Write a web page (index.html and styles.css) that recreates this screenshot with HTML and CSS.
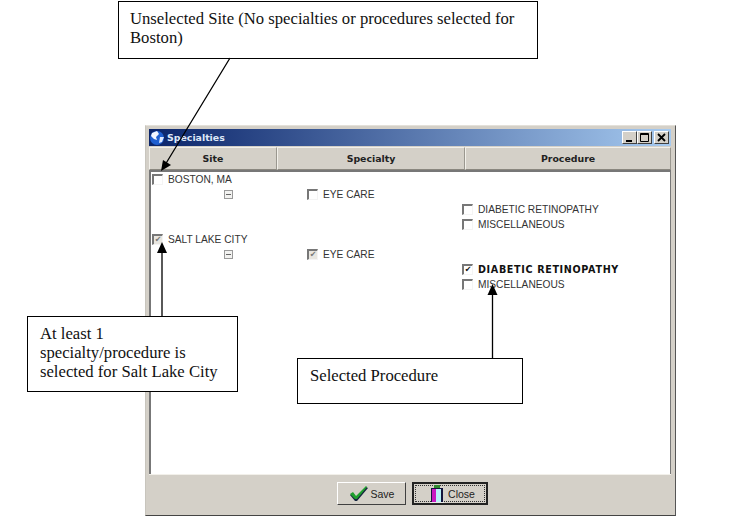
FILE: index.html
```html
<!DOCTYPE html>
<html>
<head>
	<title>Specialties</title>
	<link rel="stylesheet" href="styles.css">
</head>
<body>

<div class="window">
	<div class="titlebar">
		<svg class="globe" width="16" height="16" viewBox="0 0 16 16">
			<circle cx="8" cy="8" r="7" fill="#1f5fd0"/>
			<path d="M3 3 L8 1 L10 4 L7 7 L8 10 L5 9 L2 6 Z" fill="#f2f6ff"/>
			<path d="M11 7 L15 7 L13 12 L10 13 Z" fill="#dce8ff"/>
		</svg>
		<span class="title">Specialties</span>
		<div class="winbtns">
			<span class="winbtn"><svg width="13" height="11" viewBox="0 0 13 11"><rect x="3" y="8" width="6" height="2" fill="#000"/></svg></span>
			<span class="winbtn"><svg width="13" height="11" viewBox="0 0 13 11"><path d="M2.5 1.5 H10.5 V9.5 H2.5 Z M2 2.5 H11" fill="none" stroke="#000"/></svg></span>
			<span class="winbtn winbtn-close"><svg width="13" height="11" viewBox="0 0 13 11"><path d="M3 2 L10 9 M10 2 L3 9" fill="none" stroke="#000" stroke-width="1.8"/></svg></span>
		</div>
	</div>

	<div class="headers">
		<div class="hdr hdr-site">Site</div>
		<div class="hdr hdr-spec">Specialty</div>
		<div class="hdr hdr-proc">Procedure</div>
	</div>

	<div class="tree">
		<label class="item col1"><span class="chk"></span>BOSTON, MA</label>
		<span class="expander col1 r2"></span>
		<label class="item col2 r2"><span class="chk"></span>EYE CARE</label>
		<label class="item col3 r3"><span class="chk"></span>DIABETIC RETINOPATHY</label>
		<label class="item col3 r4"><span class="chk"></span>MISCELLANEOUS</label>
		<label class="item col1 r5"><span class="chk grey">&#10004;</span>SALT LAKE CITY</label>
		<span class="expander col1 r6"></span>
		<label class="item col2 r6"><span class="chk grey">&#10004;</span>EYE CARE</label>
		<label class="item col3 r7 picked"><span class="chk">&#10004;</span>DIABETIC RETINOPATHY</label>
		<label class="item col3 r8"><span class="chk"></span>MISCELLANEOUS</label>
	</div>

	<div class="footer">
		<button class="btn btn-save">
			<svg width="20" height="16" viewBox="0 0 20 16">
				<path d="M1 9 L4 7 L7 11 L17 1 L19 2 L8 15 L6 15 Z" fill="#16263f"/>
				<path d="M1 8 L4 6 L7 10 L17 0 L18 1 L8 13 L6 13 Z" fill="#1fa02e"/>
			</svg>
			Save
		</button>
		<button class="btn btn-close">
			<span class="focus">
				<svg width="16" height="20" viewBox="0 0 16 20">
					<rect x="5" y="1" width="6" height="3" fill="#2f8a2f"/>
					<rect x="2" y="4" width="12" height="14" fill="#14143c"/>
					<rect x="3" y="5" width="4" height="13" fill="#c818c0"/>
					<rect x="7" y="5" width="5" height="13" fill="#b8f0f8"/>
					<rect x="1" y="18" width="14" height="1" fill="#e8e8e8"/>
				</svg>
				Close
			</span>
		</button>
	</div>
</div>

<!-- callouts drawn over the screenshot -->
<div class="note note-boston">Unselected Site (No specialties or procedures selected for Boston)</div>
<div class="note note-slc">At least 1 specialty/procedure is selected for Salt Lake City</div>
<div class="note note-proc">Selected Procedure</div>

<svg class="arrows" width="732" height="520" viewBox="0 0 732 520">
	<path d="M230 58 L165 165 M162 316 L162 250 M492.500 358 L492.500 292" fill="none" stroke="#000" stroke-width="1.3"/>
	<path d="M161 171 L163 160 L171 165 Z" fill="#000"/>
	<path d="M162 242 L157 253 L167 253 Z" fill="#000"/>
	<path d="M492.500 284 L487.500 295 L497.500 295 Z" fill="#000"/>
</svg>

</body>
</html>
```

FILE: styles.css
```css
html, body {margin:0;padding:0;background:#fff;}
body {width:732px;height:520px;position:relative;overflow:hidden;}

.window {
	box-sizing:border-box;
	width:531px;
	height:391px;
	margin:125px 0 0 145px;
	padding:3px 4px 3px 3px;
	background:#d4d0c8;
	border:1px solid;
	border-color:#e4e1da #555 #444 #c8c5bd;
	display:flex;
	flex-direction:column;
	font-family:"Liberation Sans",sans-serif;
}

.titlebar {
	height:17px;
	flex:none;
	display:flex;
	align-items:center;
	background:linear-gradient(to right,#0a246a,#a6caf0);
	color:#fff;
}
.globe {margin:0 2px 0 0;}
.title {font:bold 9.400px "DejaVu Sans",sans-serif;color:#dfe8f8;}
.winbtns {margin-left:auto;display:flex;margin-right:2px;}
.winbtn {
	box-sizing:border-box;
	width:15px;
	height:13px;
	background:#d4d0c8;
	border:1px solid;
	border-color:#fff #404040 #404040 #fff;
	display:flex;
}
.winbtn svg {margin-left:-0.5px;}
.winbtn-close {margin-left:2px;}

.headers {
	height:23px;
	flex:none;
	margin-top:1px;
	display:flex;
}
.hdr {
	box-sizing:border-box;
	border:1px solid;
	border-color:#f2f0ea #9a978f #8a877f #f2f0ea;
	text-align:center;
	font:bold 9.400px/21px "DejaVu Sans",sans-serif;
	color:#222;
}
.hdr-site {width:128px;}
.hdr-spec {width:188px;}
.hdr-proc {flex:1;}

.tree {
	flex:1;
	background:#fff;
	border:solid #777;
	border-width:2px 1px 0 2px;
	display:grid;
	grid-template-columns:155px 155px 1fr;
	grid-template-rows:repeat(8,15px);
	padding-left:1px;
	font-size:10.200px;
	color:#333;
}
.item {display:flex;align-items:center;white-space:nowrap;}
.col1 {grid-column:1;}
.col2 {grid-column:2;}
.col3 {grid-column:3;}
.r2 {grid-row:2;}
.r3 {grid-row:3;}
.r4 {grid-row:4;}
.r5 {grid-row:5;}
.r6 {grid-row:6;}
.r7 {grid-row:7;}
.r8 {grid-row:8;}
.picked {font:bold 9.600px "DejaVu Sans",sans-serif;letter-spacing:.65px;color:#111;}

.chk {
	box-sizing:border-box;
	width:11px;
	height:11px;
	margin-right:5px;
	border:solid #fff;
	border-width:2px 1px 1px 2px;
	border-color:#777 #f4f4f4 #f4f4f4 #777;
	font:8px/8px "DejaVu Sans",sans-serif;
	letter-spacing:0;
	text-align:center;
	color:#111;
}
.chk.grey {background:#e8e6e0;color:#777;}

.expander {
	box-sizing:border-box;
	width:9px;
	height:9px;
	margin:3px 0 0 72px;
	border:1px solid #999;
	background:linear-gradient(#666,#666) center/5px 1px no-repeat #f2f2f0;
}

.footer {
	height:37px;
	flex:none;
	border-top:1px solid #f2f0ea;
	display:flex;
	justify-content:center;
	align-items:center;
	gap:6px;
	padding-left:5px;
}
.btn {
	box-sizing:border-box;
	height:23px;
	background:#d4d0c8;
	border:1px solid;
	border-color:#fff #404040 #404040 #fff;
	padding:0;
	font:10.500px "Liberation Sans",sans-serif;
	color:#222;
	display:flex;
	align-items:center;
	justify-content:center;
}
.btn-save {width:69px;gap:2px;}
.btn-close {width:76px;border:2px solid #222;padding:1px;}
.focus {
	flex:1;
	height:100%;
	box-sizing:border-box;
	border:1px dotted #333;
	padding-left:4px;
	display:flex;
	align-items:center;
	justify-content:center;
	gap:3px;
}

.note {
	position:absolute;
	box-sizing:border-box;
	background:#fff;
	border:1px solid #000;
	font:16.670px/19px "Liberation Serif",serif;
	color:#111;
}
.note-boston {left:118px;top:1px;width:420px;height:58px;padding:7px 12px 0 11px;}
.note-slc {left:27px;top:316px;width:211px;height:76px;padding:7px 12px 0 12px;}
.note-proc {left:297px;top:358px;width:226px;height:46px;padding:7px 12px 0 12px;}

.arrows {position:absolute;left:0;top:0;pointer-events:none;}
```
